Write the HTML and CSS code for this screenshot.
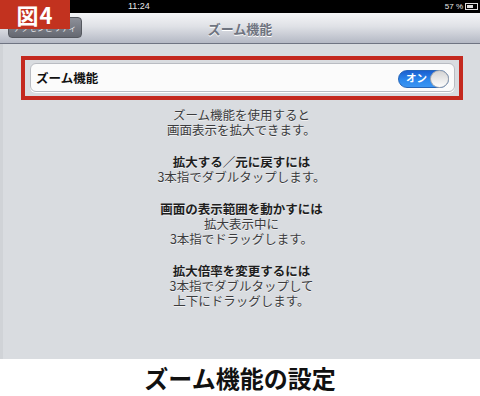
FILE: index.html
```html
<!DOCTYPE html>
<html lang="ja">
<head>
<meta charset="utf-8">
<link rel="stylesheet" href="styles.css">
</head>
<body>
<div class="screen">
  <div class="statusbar">
    <span class="time">11:24</span>
    <span class="battery"><span class="pct">57 %</span><span class="bat"><span class="bat-fill"></span></span></span>
  </div>
  <div class="navbar">
    <div class="backbtn"><span>アクセシビリティ</span></div>
    <div class="navtitle">ズーム機能</div>
  </div>
  <div class="content">
    <div class="highlight">
      <div class="cell">
        <span class="cell-label">ズーム機能</span>
        <span class="toggle"><span class="toggle-text">オン</span><span class="knob"></span></span>
      </div>
    </div>
    <div class="notes">
      <p>ズーム機能を使用すると<br>画面表示を拡大できます。</p>
      <p><b>拡大する／元に戻すには</b><br>3本指でダブルタップします。</p>
      <p><b>画面の表示範囲を動かすには</b><br>拡大表示中に<br>3本指でドラッグします。</p>
      <p><b>拡大倍率を変更するには</b><br>3本指でダブルタップして<br>上下にドラッグします。</p>
    </div>
  </div>
  <div class="figlabel">図4</div>
</div>
<div class="caption">ズーム機能の設定</div>
</body>
</html>
```
FILE: styles.css
```css
* { box-sizing: border-box; }
html, body { margin: 0; padding: 0; background: #fff; }
body {
  width: 480px;
  height: 396px;
  overflow: hidden;
  font-family: "Noto Sans CJK JP", "Noto Sans", sans-serif;
}
.screen { position: relative; width: 480px; }
.statusbar {
  height: 13px;
  background: #000;
  color: #e8e8e8;
  display: flex;
  justify-content: space-between;
  align-items: center;
  padding: 0 2px 0 128px;
  font-family: "Liberation Sans", sans-serif;
  font-size: 9px;
  line-height: 13px;
}
.battery {
  height: 13px;
  display: flex;
  align-items: center;
  gap: 2px;
}
.pct { font-size: 8px; }
.bat {
  width: 13px;
  height: 7px;
  border: 1px solid #ddd;
  display: flex;
  padding: 1px;
}
.bat-fill { width: 6px; background: #ddd; }
.navbar {
  height: 31px;
  background: linear-gradient(#f4f5f7, #dfe1e6 45%, #b4b8c4);
  border-bottom: 1px solid #6f7482;
  position: relative;
  display: flex;
  align-items: center;
  justify-content: center;
}
.backbtn {
  position: absolute;
  left: 8px;
  top: 4px;
  width: 74px;
  height: 21px;
  border-radius: 4px;
  background: linear-gradient(#8d9099, #656871);
  border: 1px solid #55585f;
  color: #e6e7ea;
  font-size: 8px;
  line-height: 19px;
  text-align: center;
  overflow: hidden;
}
.navtitle {
  font-size: 13px;
  font-weight: bold;
  color: #6f7480;
  text-shadow: 0 1px 0 #fff;
  margin-top: 1px;
}
.content {
  height: 315px;
  background: #d9dce0;
  border-left: 3px solid #d0d3d7;
  padding-top: 12px;
}
.highlight {
  margin: 0 17px 0 18px;
  height: 44px;
  border: 4px solid #c4291f;
  padding: 3px 4px 4px 5px;
}
.cell {
  height: 29px;
  background: #fbfbfb;
  border: 1px solid #b9bcc2;
  border-radius: 6px;
  box-shadow: 0 1px 0 #fff;
  display: flex;
  align-items: center;
  justify-content: space-between;
  padding: 0 5px 0 5px;
}
.cell-label {
  font-size: 12.5px;
  font-weight: bold;
  color: #111;
}
.toggle {
  position: relative;
  width: 51px;
  height: 18px;
  border-radius: 9px;
  background: linear-gradient(#1b5fcf, #2a86ec 55%, #3b95f2);
  border: 1px solid #2565b8;
  margin-top: 2px;
  display: flex;
  align-items: center;
}
.toggle-text {
  color: #fff;
  font-size: 10.5px;
  font-weight: bold;
  margin-left: 7px;
  line-height: 1;
}
.knob {
  position: absolute;
  right: -1px;
  top: -1px;
  width: 19px;
  height: 18px;
  border-radius: 50%;
  background: linear-gradient(#d4d4d4, #fdfdfd);
  border: 1px solid #a3a7ae;
}
.notes {
  margin-top: 7px;
  display: flex;
  flex-direction: column;
  gap: 17px;
  text-align: center;
  font-size: 12.5px;
  line-height: 15px;
  color: #3c3c3e;
  text-shadow: 0 1px 0 rgba(255,255,255,0.6);
}
.notes p { margin: 0; }
.notes b { color: #1e1e1e; }
.figlabel {
  position: absolute;
  left: 0;
  top: 0;
  width: 70px;
  height: 29px;
  background: #c2321f;
  color: #fff;
  font-size: 22px;
  font-weight: bold;
  line-height: 29px;
  text-align: center;
  letter-spacing: 1px;
}
.caption {
  height: 37px;
  text-align: center;
  font-size: 24px;
  font-weight: bold;
  color: #111;
  line-height: 37px;
}
```
